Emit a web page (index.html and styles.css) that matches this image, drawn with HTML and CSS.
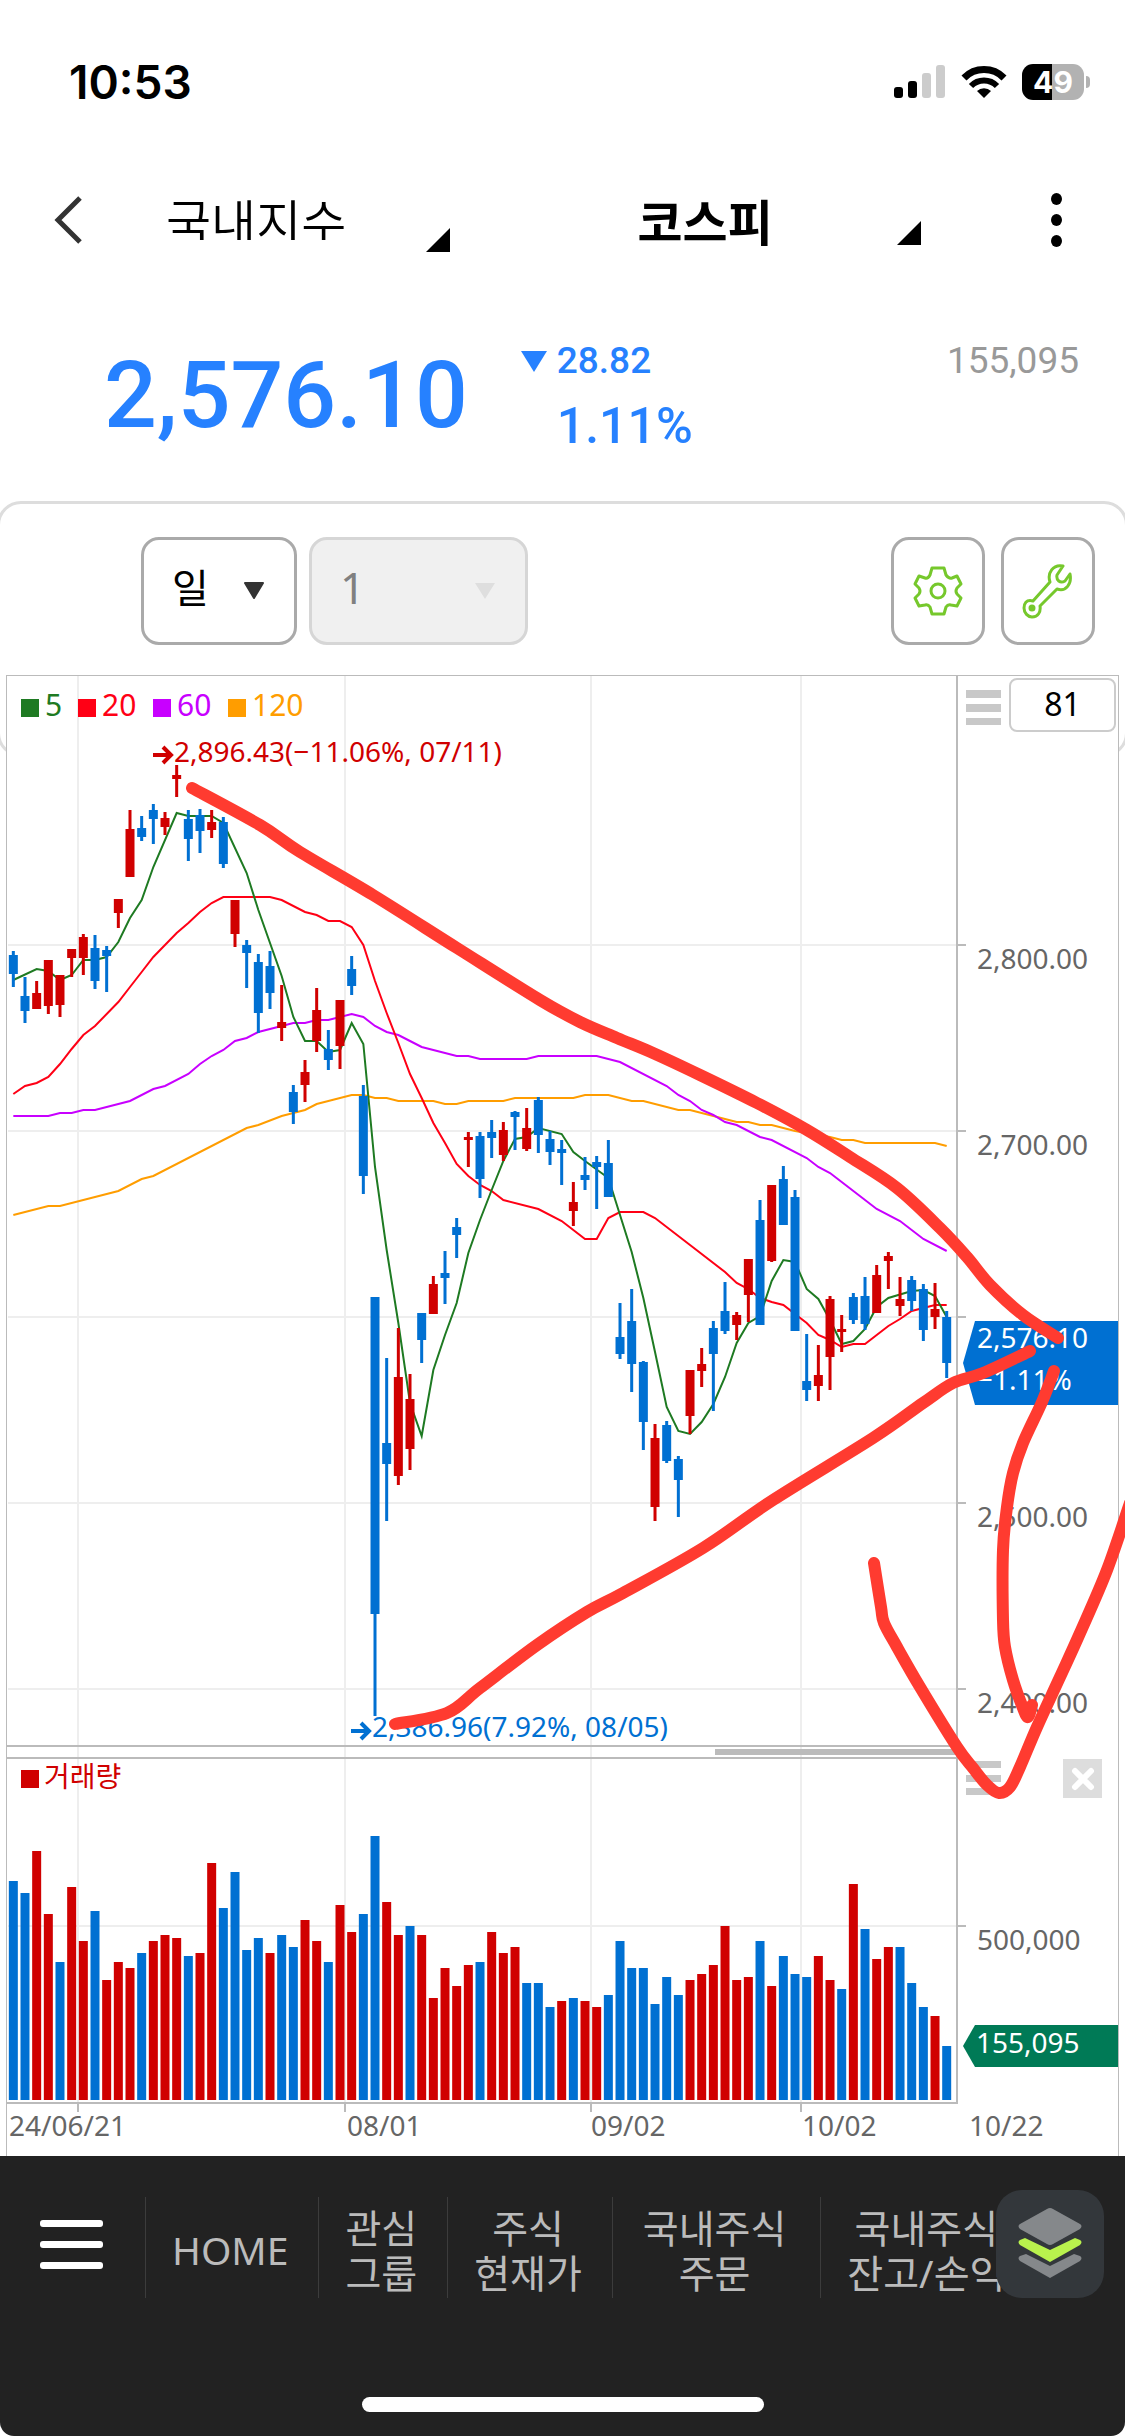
FILE: index.html
```html
<!DOCTYPE html>
<html lang="ko">
<head>
    <meta charset="UTF-8">
    <meta name="viewport" content="width=device-width, initial-scale=1.0">
    <title>국내지수 - 코스피</title>
    <link rel="stylesheet" href="styles.css">
</head>
<body>
    <div class="status-bar">
        <span class="time">10:53</span>
        <div class="status-icons">
            <svg width="52" height="34" viewBox="0 0 52 34">
                <rect x="0" y="22" width="9" height="11" rx="3" fill="#000"/>
                <rect x="14" y="16" width="9" height="17" rx="3" fill="#000"/>
                <rect x="28" y="8" width="9" height="25" rx="3" fill="#ccc"/>
                <rect x="42" y="0" width="9" height="33" rx="3" fill="#ccc"/>
            </svg>
            <svg width="46" height="34" viewBox="0 0 46 34">
                <path d="M3 13 A28 28 0 0 1 43 13" fill="none" stroke="#000" stroke-width="7"/>
                <path d="M10 21 A18 18 0 0 1 36 21" fill="none" stroke="#000" stroke-width="6"/>
                <path d="M23 33 L16 26 A10 10 0 0 1 30 26 Z" fill="#000"/>
            </svg>
            <div class="battery"><span>49</span></div>
        </div>
    </div>

    <header class="title-bar">
        <button class="back-btn" aria-label="뒤로">
            <svg width="30" height="50" viewBox="0 0 30 50"><path d="M26 3 L4 25 L26 47" fill="none" stroke="#333" stroke-width="5"/></svg>
        </button>
        <div class="title-fields">
            <label class="title-field">
                <select aria-label="지수 구분"><option>국내지수</option></select>
            </label>
            <label class="title-field title-field-strong">
                <select aria-label="지수"><option>코스피</option></select>
            </label>
        </div>
        <button class="more-btn" aria-label="더보기"><i></i><i></i><i></i></button>
    </header>

    <section class="quote">
        <strong class="price">2,576.10</strong>
        <div class="change">
            <span class="diff"><i class="down"></i>28.82</span>
            <span class="rate">1.11%</span>
        </div>
        <span class="volume">155,095</span>
    </section>

    <main>
        <div class="toolbar">
            <label class="period">
                <select aria-label="주기"><option>일</option></select>
                <svg width="22" height="18" viewBox="0 0 22 18"><path d="M2 1 H20 L11 16 Z" fill="#333" stroke="#333" stroke-width="2" stroke-linejoin="round"/></svg>
            </label>
            <label class="period unit">
                <select aria-label="단위" disabled><option>1</option></select>
                <svg width="22" height="18" viewBox="0 0 22 18"><path d="M1 1 H21 L11 17 Z" fill="#dedede"/></svg>
            </label>
            <div class="tools">
                <button class="tool" aria-label="설정">
                    <svg width="52" height="52" viewBox="0 0 52 52" fill="none" stroke="#76c82c" stroke-width="3" stroke-linejoin="round">
                        <path d="M20 3 H32 L34 10 Q37 14 40 13 L45 11 L49 19 L45 23 Q43 26 45 29 L49 33 L45 41 L39 40 Q36 39 34 42 L32 49 H20 L18 42 Q16 39 13 40 L7 41 L3 33 L7 29 Q9 26 7 23 L3 19 L7 11 L13 13 Q16 14 18 10 Z"/>
                        <circle cx="26" cy="26" r="7"/>
                    </svg>
                </button>
                <button class="tool" aria-label="도구">
                    <svg width="52" height="56" viewBox="0 0 52 56" fill="none" stroke="#76c82c" stroke-width="3" stroke-linejoin="round">
                        <path d="M41 3 C31 1 25 10 28 19 L11 38 C4 36 2 41 2 45 C2 50 6 54 10 54 C16 54 19 49 18 43 L35 26 C44 29 50 21 48 11 L43 18 C38 21 34 17 35 12 Z"/>
                        <circle cx="10" cy="45" r="2" fill="#76c82c"/>
                    </svg>
                </button>
            </div>
        </div>

        <div class="chart">
            <svg id="chart" viewBox="7 674 1112 1482">
                <g id="grid"></g>
                <g id="averages"></g>
                <g id="candles"></g>
                <g id="volumes"></g>
                <g id="labels"></g>
                <g id="drawings"></g>
            </svg>
            <button class="menu-btn" aria-label="차트 메뉴"></button>
            <input class="count" type="text" value="81" aria-label="봉 개수">
            <button class="close-btn" aria-label="거래량 닫기">
                <svg width="24" height="24" viewBox="0 0 24 24"><path d="M4 4 L20 20 M20 4 L4 20" stroke="#fff" stroke-width="6" stroke-linecap="round"/></svg>
            </button>
        </div>
    </main>

    <footer>
        <nav>
            <button class="nav-menu" aria-label="전체 메뉴"><i></i><i></i><i></i></button>
            <a href="#">HOME</a>
            <a href="#">관심<br>그룹</a>
            <a href="#">주식<br>현재가</a>
            <a href="#" class="wide">국내주식<br>주문</a>
            <a href="#">국내주식<br>잔고/손익</a>
        </nav>
        <button class="layers-btn" aria-label="화면 목록">
            <svg width="66" height="72" viewBox="0 0 66 72">
                <path d="M33 70 L3 53 Q0 50 3 48 L9 46 L33 58 L57 46 L63 48 Q66 50 63 53 Z" fill="#85888b"/>
                <path d="M33 54 L3 37 Q0 34 3 32 L8 30 L33 42 L58 30 L63 32 Q66 34 63 37 Z" fill="#b9f24d"/>
                <path d="M30 1 Q33 -1 36 1 L63 16 Q66 18 63 21 L36 36 Q33 38 30 36 L3 21 Q0 18 3 16 Z" fill="#85888b"/>
            </svg>
        </button>
        <div class="home-indicator"></div>
    </footer>

    <script src="chart.js"></script>
</body>
</html>
```
FILE: styles.css
```css
* {
    box-sizing: border-box;
}
body {
    margin: 0;
    background: #fff;
    color: #000;
    font-family: 'Noto Sans', 'Noto Sans CJK KR', sans-serif;
    overflow-x: hidden;
}
button {
    border: 0;
    padding: 0;
    background: none;
    cursor: pointer;
}
select {
    appearance: none;
    width: 100%;
    border: 0;
    background: none;
    color: inherit;
    font: inherit;
    opacity: 1;
}
svg {
    display: block;
}

/* status bar */
.status-bar {
    display: flex;
    justify-content: space-between;
    align-items: center;
    height: 164px;
    padding: 0 33px 0 69px;
}
.time {
    font: 600 46px Inter, sans-serif;
}
.status-icons {
    display: flex;
    align-items: center;
    gap: 15px;
}
.battery {
    position: relative;
    width: 62px;
    height: 36px;
    margin-right: 8px;
    border-radius: 11px;
    background: linear-gradient(90deg, #000 49%, #b2b2b2 49%);
    color: #fff;
    font: 700 30px/36px Inter, sans-serif;
    text-align: center;
}
.battery::after {
    content: '';
    position: absolute;
    right: -6px;
    top: 12px;
    width: 4px;
    height: 12px;
    border-radius: 0 4px 4px 0;
    background: #b2b2b2;
}

/* title bar */
.title-bar {
    display: flex;
    align-items: center;
    height: 112px;
    padding: 0 63px 0 54px;
}
.title-fields {
    display: flex;
    flex: 1;
    gap: 188px;
    margin: 0 130px 0 82px;
}
.title-field {
    position: relative;
    flex: 1;
    height: 72px;
    font: 350 49px/72px 'Noto Sans CJK KR', sans-serif;
}
.title-field select {
    height: 56px;
    display: block;
    padding: 0;
}
.title-field::after {
    content: '';
    position: absolute;
    right: 0;
    bottom: 4px;
    border-left: 24px solid transparent;
    border-bottom: 24px solid #000;
}
.title-field-strong {
    font-weight: 700;
}
.title-field-strong select {
    height: 70px;
}
.title-field-strong::after {
    bottom: 11px;
}
.more-btn {
    display: grid;
    gap: 9px;
}
.more-btn i {
    width: 11px;
    height: 12px;
    border-radius: 50%;
    background: #000;
}

/* quote */
.quote {
    display: flex;
    height: 225px;
    padding: 64px 46px 0 104px;
    font-family: Roboto, sans-serif;
    color: #2681ff;
}
.price {
    font-size: 93px;
    font-weight: 500;
    line-height: 112px;
}
.change {
    display: flex;
    flex-direction: column;
    margin-left: 53px;
    font-weight: 500;
}
.diff {
    display: flex;
    align-items: center;
    gap: 10px;
    font-size: 37px;
    line-height: 42px;
}
.down {
    border: 13px solid transparent;
    border-top: 21px solid #2681ff;
    border-bottom: 0;
}
.rate {
    margin: 16px 0 0 36px;
    font-size: 50px;
    line-height: 56px;
}
.volume {
    margin-left: auto;
    color: #999;
    font-size: 37px;
    line-height: 42px;
}

/* toolbar */
.toolbar {
    display: flex;
    align-items: flex-start;
    gap: 12px;
    height: 256px;
    margin: 0 -3px;
    padding: 33px 30px 0 141px;
    border: 3px solid #ddd;
    border-radius: 24px;
}
.period {
    position: relative;
    width: 156px;
    height: 108px;
    border: 3px solid #aaa;
    border-radius: 18px;
    font-size: 40px;
}
.period select {
    height: 100%;
    padding: 0 0 8px 28px;
}
.period svg {
    position: absolute;
    right: 29px;
    top: 42px;
}
.unit {
    width: 219px;
    border-color: #d6d6d6;
    background: #f0f0f0;
    color: #808080;
    font-size: 44px;
}
.tools {
    display: flex;
    gap: 16px;
    margin-left: auto;
}
.tool {
    display: grid;
    place-items: center;
    width: 94px;
    height: 108px;
    border: 3px solid #aaa;
    border-radius: 18px;
}

/* chart */
.chart {
    position: relative;
    margin: -83px 6px 0 7px;
    background: #fff;
}
#chart {
    width: 100%;
    height: auto;
    overflow: visible;
}
#chart text {
    font-size: 28px;
    fill: #666;
}
#chart .legend {
    font-size: 30px;
}
#chart .on-tag {
    fill: #fff;
}
#chart .up {
    fill: #d00000;
}
#chart .fall {
    fill: #0070d2;
}
.menu-btn {
    position: absolute;
    top: 16px;
    right: 118px;
    width: 35px;
    height: 35px;
    background: repeating-linear-gradient(#c8c8c8 0 8px, #fff 8px 14px);
}
.count {
    position: absolute;
    top: 4px;
    right: 3px;
    width: 107px;
    height: 54px;
    padding: 0 0 4px;
    border: 2px solid #ccc;
    border-radius: 8px;
    font: 32px 'Noto Sans', sans-serif;
    text-align: center;
}
.close-btn {
    position: absolute;
    top: 1085px;
    right: 17px;
    display: grid;
    place-items: center;
    width: 39px;
    height: 39px;
    background: #ddd;
}

/* bottom navigation */
footer {
    position: relative;
    height: 280px;
    padding-top: 41px;
    border-radius: 0 0 14px 14px;
    background: #222;
}
nav {
    display: flex;
    height: 101px;
    overflow: hidden;
}
nav a {
    display: flex;
    align-items: center;
    flex-shrink: 0;
    padding: 4px 30px 0 26px;
    border-left: 1px solid #3c3c3c;
    color: #bbb;
    font-size: 39px;
    line-height: 45px;
    text-align: center;
    text-decoration: none;
}
nav .wide {
    padding: 4px 34px 0 30px;
}
.nav-menu {
    display: grid;
    flex-shrink: 0;
    align-content: center;
    gap: 14px;
    width: 145px;
    padding: 0 42px 6px 40px;
}
.nav-menu i {
    height: 7px;
    border-radius: 3px;
    background: #fff;
}
.layers-btn {
    position: absolute;
    top: 34px;
    right: 21px;
    display: grid;
    place-items: center;
    width: 108px;
    height: 108px;
    border-radius: 26px;
    background: #33373b;
}
.home-indicator {
    width: 402px;
    height: 15px;
    margin: 99px auto 0;
    border-radius: 8px;
    background: #fff;
}
```
FILE: chart.js
```js
const UP = '#d00000';
const DOWN = '#0070d2';
const FIRST_X = 13.33;
const STEP = 11.667;
const BASE_Y = 2100;

// colour, high, body top, body bottom, low
const candles = [
    'b 951 955 974 987', 'b 977 996 1011 1023', 'r 981 993 1009 1009', 'r 960 960 1006 1014', 'r 975 975 1005 1017',
    'r 949 949 958 977', 'r 934 937 958 975', 'b 935 948 981 989', 'b 946 950 956 992', 'r 899 899 913 928',
    'r 810 829 877 877', 'b 816 828 837 841', 'b 804 810 819 844', 'r 812 818 827 835', 'r 765 775 779 797',
    'b 810 819 839 861', 'b 809 815 831 853', 'r 810 822 830 838', 'b 817 822 864 868', 'r 900 900 934 947',
    'b 940 945 953 988', 'b 954 962 1013 1033', 'b 951 966 993 1009', 'r 985 1022 1028 1041', 'b 1085 1092 1112 1124',
    'r 1060 1072 1085 1102', 'r 988 1010 1041 1052', 'b 1030 1049 1060 1070', 'r 1000 1000 1046 1069', 'b 956 969 986 995',
    'b 1085 1096 1176 1194', 'b 1297 1297 1614 1716', 'b 1358 1443 1464 1521', 'r 1328 1377 1476 1485', 'r 1374 1399 1449 1470',
    'b 1313 1313 1340 1363', 'r 1276 1284 1314 1314', 'b 1251 1273 1278 1304', 'b 1218 1227 1235 1258', 'r 1132 1137 1140 1167',
    'b 1132 1136 1179 1198', 'b 1120 1132 1138 1158', 'r 1122 1130 1155 1161', 'b 1111 1112 1117 1150', 'r 1108 1128 1149 1151',
    'b 1097 1100 1135 1153', 'b 1131 1139 1152 1165', 'b 1140 1149 1153 1185', 'r 1182 1202 1211 1226', 'b 1157 1175 1180 1190',
    'b 1156 1162 1167 1209', 'b 1140 1163 1197 1197', 'b 1303 1337 1354 1359', 'b 1289 1321 1364 1392', 'b 1361 1362 1422 1450',
    'r 1424 1438 1507 1521', 'b 1421 1425 1461 1463', 'b 1456 1459 1480 1517', 'r 1370 1370 1416 1434', 'r 1348 1364 1371 1387',
    'b 1321 1328 1354 1411', 'b 1282 1311 1331 1334', 'r 1312 1315 1325 1340', 'r 1259 1259 1295 1322', 'b 1200 1220 1325 1325',
    'r 1185 1185 1261 1262', 'b 1166 1179 1225 1225', 'b 1190 1197 1331 1331', 'b 1334 1381 1390 1401', 'r 1345 1375 1386 1401',
    'r 1296 1299 1357 1390', 'r 1315 1329 1332 1352', 'b 1293 1297 1320 1324', 'b 1277 1296 1324 1330', 'r 1265 1275 1313 1313',
    'r 1252 1256 1261 1289', 'r 1277 1299 1306 1316', 'b 1276 1280 1301 1311', 'b 1284 1289 1330 1341', 'r 1283 1309 1317 1329',
    'b 1311 1317 1363 1378'
];

const volumeColors = 'bbrrbrrbrrrbrrrbrrbbbbrbbrrbrrbbrrbrrrrrbrrrbbbrbrrbbbbbbbrrrrrrbrbbbrrbrbrrbbbrb';
const volumes = [
    219, 207, 249, 186, 138, 213, 159, 189, 120, 138, 132, 147, 159, 165, 162, 144, 147, 237, 192, 228,
    150, 162, 147, 165, 153, 180, 159, 138, 195, 168, 186, 264, 198, 165, 174, 165, 102, 132, 114, 135,
    138, 168, 147, 153, 117, 117, 93, 99, 102, 99, 93, 105, 159, 132, 132, 96, 123, 105, 120, 126,
    135, 174, 120, 123, 159, 114, 144, 126, 123, 144, 120, 111, 216, 171, 141, 153, 153, 117, 93, 84, 54
];

// index:y pairs, straight between the given points
const averages = {
    '#ff9d00': '0:1215 3:1206 4:1206 9:1191 11:1179 12:1176 20:1128 21:1125 23:1116 24:1113 25:1110 26:1104 27:1101 29:1095 30:1095 31:1098 32:1098 33:1101 36:1101 37:1104 38:1104 39:1101 42:1101 43:1098 48:1098 49:1095 51:1095 53:1101 54:1101 57:1110 58:1110 61:1119 62:1122 63:1122 64:1125 65:1125 67:1131 70:1137 71:1140 72:1140 73:1143 79:1143 80:1146',
    '#c800ff': '0:1116 3:1116 4:1113 5:1113 6:1110 7:1110 8:1107 10:1101 12:1089 13:1086 15:1074 16:1064 17:1056 18:1050 19:1041 20:1038 21:1032 24:1023 25:1023 26:1020 27:1020 29:1014 30:1017 31:1026 32:1032 33:1035 34:1041 35:1047 38:1056 39:1056 40:1059 44:1059 45:1056 50:1056 52:1062 56:1086 57:1095 58:1101 59:1110 60:1115 61:1122 62:1125 64:1137 65:1140 68:1158 69:1167 70:1173 71:1182 74:1209 76:1221 78:1239 80:1251',
    '#ff0015': '0:1094 1:1086 2:1083 3:1077 4:1064 5:1049 6:1035 7:1026 9:1002 10:987 11:972 12:957 13:945 14:933 15:923 16:912 17:903 18:897 22:897 23:900 25:912 26:915 27:921 28:921 29:927 30:945 31:981 32:1013 33:1043 34:1074 35:1098 36:1123 37:1143 38:1164 39:1176 40:1185 41:1191 42:1200 45:1209 47:1221 49:1239 50:1239 51:1218 52:1212 54:1212 55:1218 58:1245 61:1272 62:1283 63:1289 64:1298 65:1302 66:1305 68:1323 69:1335 70:1340 71:1347 72:1344 73:1344 75:1326 76:1319 77:1311 79:1305 80:1305',
    '#1e7a22': '0:980 2:969 3:971 4:980 5:975 6:960 7:960 8:957 9:942 10:918 11:900 12:867 14:813 15:816 17:816 18:823 20:873 21:910 23:976 24:1017 25:1041 26:1041 27:1052 28:1050 29:1023 30:1044 31:1167 32:1250 33:1323 34:1403 35:1436 36:1370 37:1335 38:1303 39:1253 40:1220 41:1190 42:1161 43:1139 44:1137 45:1128 47:1134 48:1152 49:1161 51:1178 52:1215 53:1252 54:1298 55:1352 56:1407 57:1431 58:1434 59:1422 60:1404 61:1377 62:1343 63:1323 64:1316 65:1281 66:1260 67:1262 68:1289 69:1299 70:1320 71:1344 72:1341 73:1329 74:1307 75:1298 77:1291 78:1290 79:1296 80:1317'
};

const drawings = [
    '192,788 260,825 300,852 373,895 457,948 540,1000 580,1022 617,1038 653,1053 700,1075 757,1103 807,1130 850,1157 897,1188 940,1228 967,1257 990,1285 1023,1315 1058,1338',
    '395,1724 447,1713 480,1688 537,1645 587,1612 623,1593 703,1548 773,1500 873,1438 923,1403 953,1383 983,1373 1030,1351',
    '1054,1371 1042,1402 1023,1443 1013,1473 1007,1507 1003,1550 1003,1620 1005,1647 1013,1680 1023,1708 1028,1717 1032,1705',
    '874,1563 881,1607 884,1623 897,1647 920,1687 957,1747 973,1768 987,1785 999,1793 1010,1787 1020,1767 1037,1727 1060,1677 1080,1633 1107,1570 1130,1503'
];

function add(group, name, attrs, text) {
    const el = document.createElementNS('http://www.w3.org/2000/svg', name);
    for (const key in attrs) {
        el.setAttribute(key, attrs[key]);
    }
    if (text) {
        el.textContent = text;
    }
    document.getElementById(group).appendChild(el);
}

function rect(group, x, y, width, height, fill) {
    add(group, 'rect', { x, y, width, height, fill });
}

function label(x, y, text, className) {
    add('labels', 'text', { x, y, class: className || '' }, text);
}

// Curve through all points of a hand drawn line
function smooth(points) {
    const p = points.split(' ').map(s => s.split(',').map(Number));
    let d = `M${p[0]}`;
    for (let i = 0; i < p.length - 1; i++) {
        const before = p[i - 1] || p[i];
        const from = p[i];
        const to = p[i + 1];
        const after = p[i + 2] || to;
        const c1 = [from[0] + (to[0] - before[0]) / 6, from[1] + (to[1] - before[1]) / 6];
        const c2 = [to[0] - (after[0] - from[0]) / 6, to[1] - (after[1] - from[1]) / 6];
        d += ` C${c1} ${c2} ${to}`;
    }
    return d;
}

// grid and frame
[78, 345, 591, 801].forEach(x => {
    rect('grid', x - 1, 675, 2, 1427, '#eee');
    rect('grid', x - 1, 2103, 2, 9, '#bbb');
});
[945, 1131, 1317, 1503, 1689, 1926].forEach(y => {
    rect('grid', 8, y - 1, 949, 2, '#eee');
    rect('grid', 957, y - 1, 9, 2, '#bbb');
});
rect('grid', 6, 675, 1, 1481, '#bbb');
rect('grid', 1118, 675, 1, 1481, '#bbb');
rect('grid', 6, 675, 1112, 1, '#bbb');
rect('grid', 956, 675, 2, 1428, '#bbb');
rect('grid', 7, 1745, 950, 2, '#bbb');
rect('grid', 7, 1757, 950, 2, '#bbb');
rect('grid', 7, 2102, 951, 2, '#bbb');
rect('grid', 715, 1749, 242, 6, '#bbb');

for (const color in averages) {
    const points = averages[color].split(' ').map(s => {
        const [i, y] = s.split(':');
        return `${FIRST_X + i * STEP},${y}`;
    }).join(' ');
    add('averages', 'polyline', { points, fill: 'none', stroke: color, 'stroke-width': 2 });
}

candles.forEach((candle, i) => {
    const [c, high, top, bottom, low] = candle.split(' ');
    const x = FIRST_X + i * STEP;
    const color = c === 'r' ? UP : DOWN;
    rect('candles', x - 1.5, high, 3, low - high, color);
    rect('candles', x - 4.5, top, 9, bottom - top, color);
});

volumes.forEach((height, i) => {
    rect('volumes', FIRST_X + i * STEP - 4.5, BASE_Y - height, 9, height, volumeColors[i] === 'r' ? UP : DOWN);
});

// legend
[[21, '5', '#1e7a22'], [78, '20', '#ff0015'], [153, '60', '#c800ff'], [228, '120', '#ff9d00']].forEach(([x, text, color]) => {
    rect('labels', x, 699, 18, 18, color);
    add('labels', 'text', { x: x + 24, y: 716, class: 'legend', style: `fill: ${color}` }, text);
});
rect('labels', 21, 1770, 18, 18, UP);
label(44, 1787, '거래량', 'up');

// highest and lowest price
add('labels', 'path', { d: 'M153 755 H171 M163 747 L171 755 L163 763', fill: 'none', stroke: UP, 'stroke-width': 4 });
label(174, 762, '2,896.43(−11.06%, 07/11)', 'up');
add('labels', 'path', { d: 'M351 1731 H369 M361 1723 L369 1731 L361 1739', fill: 'none', stroke: DOWN, 'stroke-width': 4 });
label(372, 1737, '2,386.96(7.92%, 08/05)', 'fall');

// axes, the 2,600 label is left out while the price tag lies over it
[[969, '2,800.00'], [1155, '2,700.00'], [1527, '2,500.00'], [1713, '2,400.00'], [1950, '500,000']].forEach(([y, text]) => {
    label(977, y, text);
});
[[9, '24/06/21'], [347, '08/01'], [591, '09/02'], [802, '10/02'], [969, '10/22']].forEach(([x, text]) => {
    label(x, 2136, text);
});

// current value tags
add('labels', 'path', { d: 'M963 1363 L975 1321 H1118 V1405 H975 Z', fill: DOWN });
label(977, 1348, '2,576.10', 'on-tag');
label(977, 1390, '−1.11%', 'on-tag');
add('labels', 'path', { d: 'M963 2046 L975 2025 H1118 V2067 H975 Z', fill: '#007a56' });
label(976, 2053, '155,095', 'on-tag');

// volume panel handle
[1761, 1775, 1788].forEach(y => rect('labels', 966, y, 35, 7, '#c8c8c8'));

drawings.forEach(points => {
    add('drawings', 'path', { d: smooth(points), fill: 'none', stroke: '#ff3b30', 'stroke-width': 12, 'stroke-linecap': 'round', 'stroke-linejoin': 'round' });
});
```
